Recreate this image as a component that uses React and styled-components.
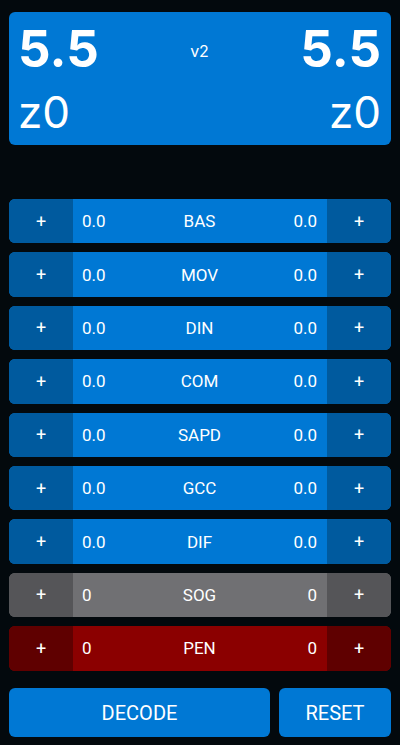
import React from "react";
import styled, { createGlobalStyle } from "styled-components";

const GlobalStyle = createGlobalStyle`
  html, body {
    margin: 0;
    padding: 0;
    background: #03090d;
  }
  body {
    font-family: Roboto, "Liberation Sans", sans-serif;
    color: #fff;
  }
`;

const Page = styled.div`
  width: 400px;
  height: 745px;
  box-sizing: border-box;
  padding: 12px 9px 8px;
  display: flex;
  flex-direction: column;
`;

const ScoreCard = styled.div`
  height: 133px;
  box-sizing: border-box;
  background: #0078d4;
  border-radius: 6px;
  padding: 11px 10px 11px 9px;
  display: grid;
  grid-template-columns: 1fr auto 1fr;
  font-family: Inter, "Liberation Sans", sans-serif;
`;

const Side = styled.div`
  display: flex;
  flex-direction: column;
  justify-content: space-between;
  align-items: ${(p) => (p.right ? "flex-end" : "flex-start")};
`;

const Score = styled.div`
  font-size: 51px;
  font-weight: bold;
  line-height: 1;
`;

const Zone = styled.div`
  font-size: 44px;
  line-height: 1;
`;

const Version = styled.div`
  font-size: 16px;
  line-height: 1;
  padding-top: 20px;
`;

const Rows = styled.div`
  margin-top: 54px;
  display: flex;
  flex-direction: column;
  gap: 9px;
`;

const themes = {
  blue: { mid: "#0078d4", side: "#005a9e" },
  grey: { mid: "#707073", side: "#555558" },
  red: { mid: "#8b0000", side: "#5f0000" },
};

const Row = styled.div`
  height: 44.4px;
  display: grid;
  grid-template-columns: 64px 1fr 64px;
  border-radius: 6px;
  overflow: hidden;
  background: ${(p) => themes[p.tone].mid};
  font-size: 17px;
`;

const PlusCell = styled.button`
  border: none;
  margin: 0;
  padding: 0;
  color: #fff;
  font-family: Roboto, sans-serif;
  font-size: 18px;
  background: ${(p) => themes[p.tone].side};
  display: flex;
  align-items: center;
  justify-content: center;
`;

const Middle = styled.div`
  display: grid;
  grid-template-columns: 1fr auto 1fr;
  align-items: center;
  padding: 0 10px 0 9px;
`;

const Value = styled.span`
  text-align: ${(p) => (p.right ? "right" : "left")};
`;

const Label = styled.span`
  text-align: center;
`;

const Actions = styled.div`
  margin-top: auto;
  display: grid;
  grid-template-columns: 261px 1fr;
  gap: 9px;
`;

const ActionButton = styled.button`
  height: 49px;
  border: none;
  border-radius: 6px;
  background: #0078d4;
  color: #fff;
  font-family: Roboto, sans-serif;
  font-size: 20px;
`;

const stats = [
  { label: "BAS", tone: "blue", value: "0.0" },
  { label: "MOV", tone: "blue", value: "0.0" },
  { label: "DIN", tone: "blue", value: "0.0" },
  { label: "COM", tone: "blue", value: "0.0" },
  { label: "SAPD", tone: "blue", value: "0.0" },
  { label: "GCC", tone: "blue", value: "0.0" },
  { label: "DIF", tone: "blue", value: "0.0" },
  { label: "SOG", tone: "grey", value: "0" },
  { label: "PEN", tone: "red", value: "0" },
];

export default function App() {
  return (
    <Page>
      <GlobalStyle />
      <ScoreCard>
        <Side>
          <Score>5.5</Score>
          <Zone>z0</Zone>
        </Side>
        <Version>v2</Version>
        <Side right>
          <Score>5.5</Score>
          <Zone>z0</Zone>
        </Side>
      </ScoreCard>
      <Rows>
        {stats.map((s) => (
          <Row key={s.label} tone={s.tone}>
            <PlusCell tone={s.tone}>+</PlusCell>
            <Middle>
              <Value>{s.value}</Value>
              <Label>{s.label}</Label>
              <Value right>{s.value}</Value>
            </Middle>
            <PlusCell tone={s.tone}>+</PlusCell>
          </Row>
        ))}
      </Rows>
      <Actions>
        <ActionButton>DECODE</ActionButton>
        <ActionButton>RESET</ActionButton>
      </Actions>
    </Page>
  );
}
